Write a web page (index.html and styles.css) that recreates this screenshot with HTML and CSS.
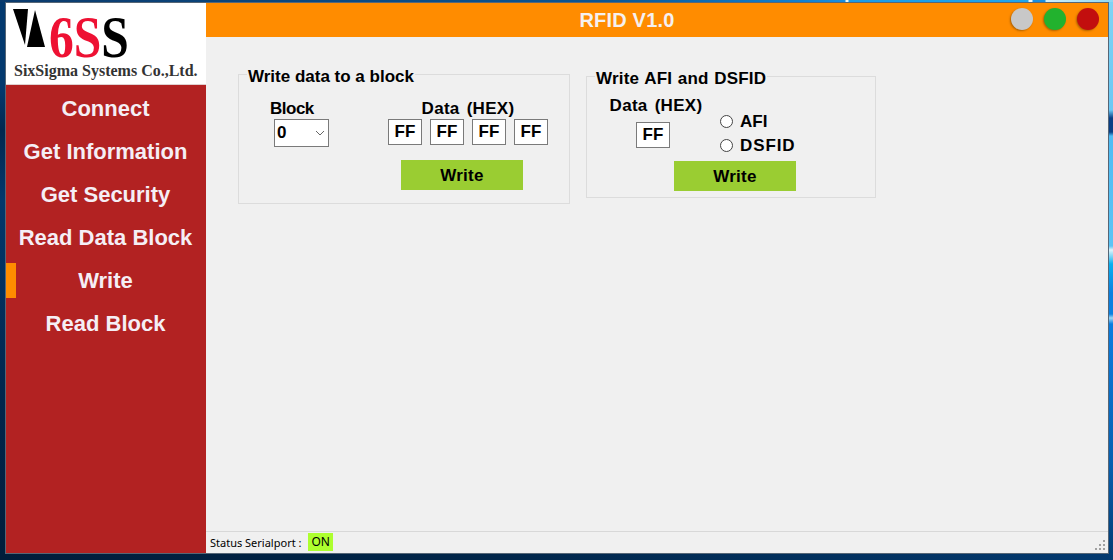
FILE: index.html
```html
<!DOCTYPE html>
<html lang="en">
<head>
  <meta charset="UTF-8">
  <title>RFID V1.0</title>
  <link rel="stylesheet" href="styles.css">
</head>
<body>
  <div class="window">
    <div class="sidebar">
      <div class="logo">
        <div class="logo-top">
          <svg class="logo-mark" width="33" height="38" viewBox="0 0 33 38">
            <polygon points="0,0 15,0 12,36" fill="#000"/>
            <polygon points="22,1 32,38 14,38" fill="#000"/>
          </svg>
          <span class="logo-text"><span class="logo-six">6S</span>S</span>
        </div>
        <div class="logo-name">SixSigma Systems Co.,Ltd.</div>
      </div>
      <ul class="menu">
        <li>Connect</li>
        <li>Get Information</li>
        <li>Get Security</li>
        <li>Read Data Block</li>
        <li class="active">Write</li>
        <li>Read Block</li>
      </ul>
    </div>
    <div class="main">
      <div class="titlebar">
        <span class="title">RFID V1.0</span>
        <div class="dots">
          <span class="dot grey"></span>
          <span class="dot green"></span>
          <span class="dot red"></span>
        </div>
      </div>
      <div class="content">
        <fieldset class="group group-block">
          <legend>Write data to a block</legend>
          <div class="cols">
            <div class="col-block">
              <label class="label-block">Block</label>
              <div class="select">0
                <svg width="10" height="6" viewBox="0 0 10 6"><path d="M1 1l4 4 4-4" fill="none" stroke="#666" stroke-width="1"/></svg>
              </div>
            </div>
            <div class="col-data">
              <label class="label-data">Data (HEX)</label>
              <div class="hex-row">
                <input class="hex" value="FF">
                <input class="hex" value="FF">
                <input class="hex" value="FF">
                <input class="hex" value="FF">
              </div>
              <button class="btn">Write</button>
            </div>
          </div>
        </fieldset>
        <fieldset class="group group-afi">
          <legend>Write AFI and DSFID</legend>
          <div class="afi-top">
            <div class="col-afi">
              <label class="label-data">Data (HEX)</label>
              <input class="hex" value="FF">
            </div>
            <div class="radios">
              <div class="radio"><span class="circle"></span><span class="radio-text">AFI</span></div>
              <div class="radio"><span class="circle"></span><span class="radio-text dsfid">DSFID</span></div>
            </div>
          </div>
          <button class="btn">Write</button>
        </fieldset>
      </div>
      <div class="statusbar">
        <span>Status Serialport :</span>
        <span class="on">ON</span>
        <svg class="grip" width="12" height="12" viewBox="0 0 12 12">
          <path d="M8 0h2v2H8zM4 4h2v2H4zM8 4h2v2H8zM0 8h2v2H0zM4 8h2v2H4zM8 8h2v2H8z" fill="#a0a0a0"/>
        </svg>
      </div>
    </div>
  </div>
</body>
</html>
```

FILE: styles.css
```css
html, body {
  height: 100%;
}
body {
  margin: 0;
  box-sizing: border-box;
  padding: 2px 4px 6px 5px;
  background-color: #02305c;
  background-image:
    linear-gradient(90deg, #0a3a6c 0, #0a5592 600px, #1080d0 800px, #1a8fe0 845px, #e8f6fc 846px, #e8f6fc 848px, #1a9be8 849px, #1fa5ec 1028px, #e8f6fc 1029px, #e8f6fc 1032px, #1a8fe0 1033px, #1a8fe0 1045px, #d0eefa 1046px, #8fd8f5 1113px),
    linear-gradient(180deg, #7fd4f5 0, #6cc8f5 110px, #0a3f85 118px, #0a3f85 132px, #4fbcf5 136px, #5cc4f5 246px, #dff4fb 250px, #0ab0f0 264px, #0c80e0 293px, #0c80e0 314px, #9fd8f5 318px, #0a7de0 324px, #0860b0 464px, #023a70 560px),
    linear-gradient(180deg, #03396e 0, #03396e 90px, #02284f 130px, #03386c 200px, #02264c 400px, #011d3a 560px),
    linear-gradient(90deg, #011d3a 0, #01264a 500px, #033a70 1113px);
  background-size: 100% 2px, 4px 100%, 5px 100%, 100% 100%;
  background-position: 0 0, 100% 0, 0 0, 0 0;
  background-repeat: no-repeat;
  font-family: "Liberation Sans", Arial, sans-serif;
  color: #000;
  overflow: hidden;
}
.window {
  height: 100%;
  box-sizing: border-box;
  display: flex;
  background: #f0f0f0;
  border: 1px solid #566676;
}
.sidebar {
  width: 200px;
  background: #b22222;
  flex-shrink: 0;
}
.logo {
  height: 82px;
  background: #fff;
  border-bottom: 1px solid #e0d0d0;
  padding: 6px 0 0 7px;
  box-sizing: border-box;
  font-family: "Liberation Serif", serif;
  font-weight: bold;
}
.logo-top {
  display: flex;
  align-items: flex-start;
  height: 54px;
}
.logo-mark {
  flex-shrink: 0;
}
.logo-text {
  display: inline-block;
  margin-left: 3px;
  font-size: 59px;
  line-height: 56px;
  white-space: nowrap;
  transform: scaleX(0.84);
  transform-origin: left;
}
.logo-six {
  color: #ee1133;
}
.logo-name {
  font-size: 16px;
  line-height: 16px;
  color: #333;
  white-space: nowrap;
  margin-left: 1px;
}
.menu {
  list-style: none;
  margin: 0;
  padding: 6px 1px 0 0;
}
.menu li {
  height: 35px;
  margin-bottom: 8px;
  line-height: 36px;
  text-align: center;
  color: #f5eef5;
  font-size: 22px;
  font-weight: bold;
  position: relative;
}
.menu li.active::before {
  content: "";
  position: absolute;
  left: 0;
  top: 0;
  width: 10px;
  height: 35px;
  background: #ff8c00;
}
.main {
  flex: 1;
  display: flex;
  flex-direction: column;
  min-width: 0;
}
.titlebar {
  height: 34px;
  flex-shrink: 0;
  background: #ff8c00;
  display: flex;
  align-items: center;
  justify-content: center;
  padding-right: 60px;
  position: relative;
}
.title {
  color: #f5f0f0;
  font-size: 20px;
  font-weight: bold;
  letter-spacing: 0.2px;
}
.dots {
  position: absolute;
  right: 9px;
  top: 5px;
  display: flex;
  gap: 11px;
}
.dot {
  width: 22px;
  height: 22px;
  border-radius: 50%;
  box-shadow: -1px 1px 2px rgba(120, 70, 0, 0.6);
}
.grey { background: #c8c8c8; }
.green { background: #22b22e; }
.red { background: #c20e0e; }
.content {
  flex: 1;
  display: flex;
  align-items: flex-start;
  gap: 16px;
  padding: 25px 0 0 32px;
}
.group {
  margin: 0;
  padding: 0;
  border: 1px solid #dcdcdc;
  box-sizing: border-box;
  font-size: 17px;
  font-weight: bold;
}
.group legend {
  padding: 6px 1px 0 1px;
  margin-left: 8px;
  line-height: 18px;
  white-space: nowrap;
}
.group-block {
  width: 332px;
  height: 142px;
}
.group-afi {
  width: 290px;
  height: 134px;
  margin-top: 2px;
}
.group-afi legend {
  letter-spacing: 0.2px;
  word-spacing: 0.7px;
}
.cols {
  display: flex;
}
.group label {
  display: block;
  padding-top: 1px;
  text-align: center;
  line-height: 18px;
  white-space: nowrap;
}
.label-data {
  letter-spacing: 0.3px;
  word-spacing: 2px;
}
.group .label-block {
  text-align: left;
  margin-left: -4px;
  letter-spacing: -0.5px;
}
.col-block {
  width: 55px;
  margin: 13px 0 0 35px;
}
.select {
  width: 55px;
  height: 28px;
  box-sizing: border-box;
  border: 1px solid #7a7a7a;
  background: #fff;
  display: flex;
  align-items: center;
  justify-content: space-between;
  padding: 0 3px 0 2px;
  margin-top: 1px;
}
.col-data {
  width: 160px;
  margin: 13px 0 0 59px;
}
.hex-row {
  display: flex;
  gap: 8px;
  margin-top: 1px;
}
.hex {
  width: 34px;
  height: 26px;
  box-sizing: border-box;
  border: 1px solid #7a7a7a;
  background: #fff;
  padding: 0;
  margin: 0;
  text-align: center;
  font: inherit;
  font-weight: bold;
  color: #000;
}
.btn {
  display: block;
  width: 122px;
  height: 30px;
  border: none;
  padding: 1px 0 0 0;
  background: #9acd32;
  font: inherit;
  font-weight: bold;
  letter-spacing: 0.3px;
  color: #000;
}
.col-data .btn {
  margin: 15px 0 0 13px;
}
.afi-top {
  display: flex;
}
.col-afi {
  width: 94px;
  margin: 8px 0 0 22px;
}
.col-afi .hex {
  display: block;
  margin: 7px 0 0 27px;
}
.radios {
  margin: 21px 0 0 17px;
}
.radio {
  display: flex;
  align-items: center;
  height: 24px;
}
.radio-text {
  padding-top: 1px;
}
.dsfid {
  letter-spacing: 0.9px;
}
.circle {
  width: 11px;
  height: 11px;
  border: 1px solid #444;
  border-radius: 50%;
  background: #fff;
  margin-right: 7px;
}
.group-afi .btn {
  margin: 4px 0 0 87px;
}
.statusbar {
  height: 22px;
  flex-shrink: 0;
  box-sizing: border-box;
  border-top: 1px solid #d8d8d8;
  display: flex;
  align-items: center;
  font-family: "Noto Sans", "Open Sans", sans-serif;
  font-size: 11px;
  padding: 0 0 1px 4px;
  position: relative;
}
.on {
  background: #adff2f;
  margin-left: 7px;
  padding: 0 3px;
  font-size: 12px;
  line-height: 18px;
}
.grip {
  position: absolute;
  right: 1px;
  bottom: 1px;
}
```
